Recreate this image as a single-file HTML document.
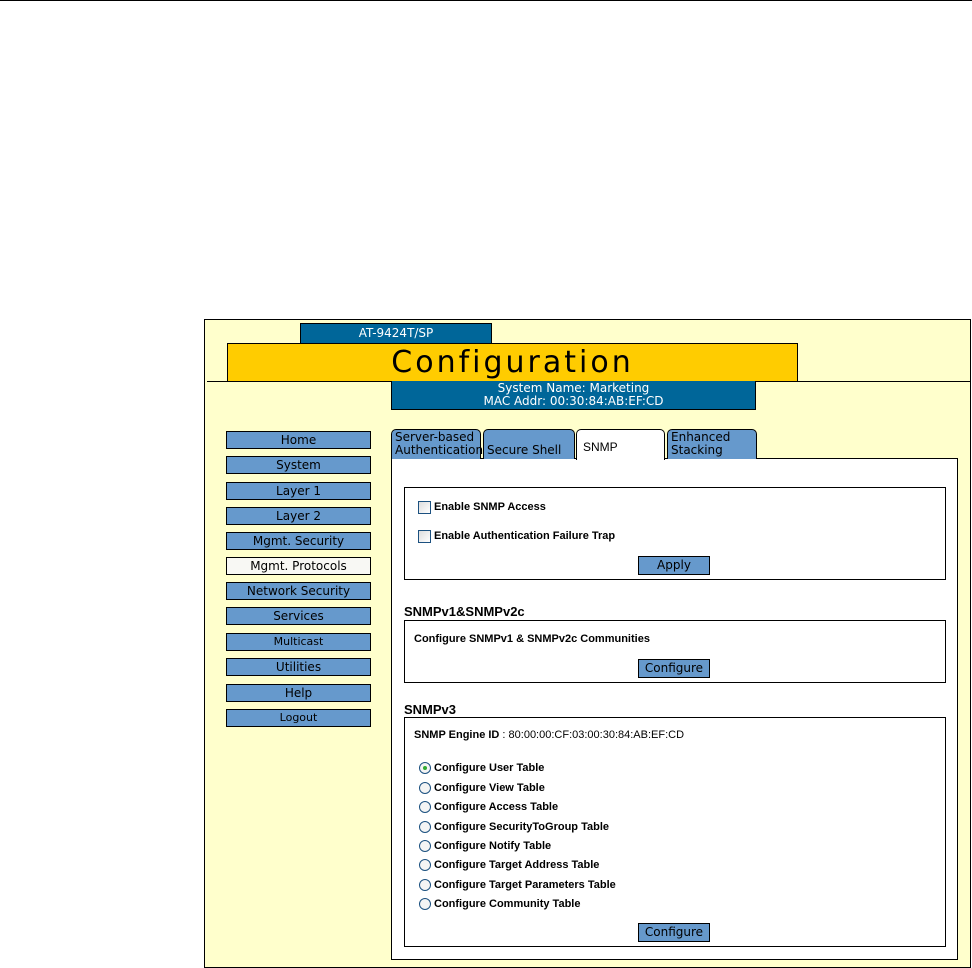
<!DOCTYPE html>
<html><head><meta charset="utf-8"><style>
*{margin:0;padding:0;box-sizing:border-box}
body{width:972px;height:968px;background:#fff;position:relative;overflow:hidden;font-family:"DejaVu Sans","Liberation Sans",sans-serif}
.a{position:absolute}
.nav{position:absolute;left:226px;width:145px;height:18px;background:#6699cc;border:1px solid #000;font-size:12px;text-align:center;line-height:16px;color:#000}
.tab{position:absolute;top:429px;height:30px;background:#6699cc;border:1px solid #000;border-bottom:none;border-radius:5px 5px 0 0;font-size:12px;line-height:13px;padding:1px 3px}
.box{position:absolute;left:404px;width:542px;border:1px solid #000;background:#fff}
.lbl{position:absolute;font-family:"Liberation Sans",sans-serif;font-weight:bold;font-size:11px;color:#000}
.btn{position:absolute;left:638px;width:72px;height:19px;background:#6699cc;border:1px solid #000;font-size:12px;text-align:center;line-height:17px}
.cb{position:absolute;left:418px;width:13px;height:13px;border:1px solid #1c5180;background:linear-gradient(135deg,#ddd,#fff)}
.rd{position:absolute;left:419px;width:12px;height:12px;border:1px solid #1c5180;border-radius:50%;background:#f4f4f4}
.h{position:absolute;left:404px;font-family:"Liberation Sans",sans-serif;font-weight:bold;font-size:13px}
</style></head><body>
<div class="a" style="left:0;top:0;width:972px;height:1px;background:#000"></div>
<div class="a" style="left:204px;top:319px;width:767px;height:649px;background:#ffffcc;border:1px solid #000"></div>
<div class="a" style="left:300px;top:323px;width:192px;height:21px;background:#006699;border:1px solid #000;color:#fff;font-size:12px;text-align:center;line-height:19px">AT-9424T/SP</div>
<div class="a" style="left:227px;top:343px;width:571px;height:39px;background:#ffcc00;border:1px solid #000;font-size:30px;letter-spacing:3px;text-align:center;line-height:38px">Configuration</div>
<div class="a" style="left:207px;top:381px;width:763px;height:1px;background:#000"></div>
<div class="a" style="left:391px;top:381px;width:365px;height:29px;background:#006699;border:1px solid #000;border-top:none;color:#fff;font-size:12px;text-align:center;line-height:13px;padding-top:1px">System Name: Marketing<br>MAC Addr: 00:30:84:AB:EF:CD</div>

<div class="nav" style="top:431px">Home</div>
<div class="nav" style="top:456px">System</div>
<div class="nav" style="top:482px">Layer 1</div>
<div class="nav" style="top:507px">Layer 2</div>
<div class="nav" style="top:532px">Mgmt. Security</div>
<div class="nav" style="top:557px;background:#f8f8f4">Mgmt. Protocols</div>
<div class="nav" style="top:582px">Network Security</div>
<div class="nav" style="top:607px">Services</div>
<div class="nav" style="top:633px;font-size:11px">Multicast</div>
<div class="nav" style="top:658px">Utilities</div>
<div class="nav" style="top:684px">Help</div>
<div class="nav" style="top:709px;font-size:11px">Logout</div>

<div class="a" style="left:391px;top:458px;width:567px;height:502px;background:#fff;border:1px solid #000"></div>
<div class="tab" style="left:391px;width:90px">Server-based<br>Authentication</div>
<div class="tab" style="left:483px;width:92px;padding-top:14px">Secure Shell</div>
<div class="tab" style="left:576px;width:89px;background:#fff;height:31px;padding-top:11px;padding-left:6px;font-family:'Liberation Sans',sans-serif">SNMP</div>
<div class="tab" style="left:667px;width:90px">Enhanced<br>Stacking</div>

<div class="box" style="top:487px;height:93px"></div>
<div class="cb" style="top:501px"></div><div class="lbl" style="left:434px;top:501px">Enable SNMP Access</div>
<div class="cb" style="top:530px"></div><div class="lbl" style="left:434px;top:530px">Enable Authentication Failure Trap</div>
<div class="btn" style="top:556px">Apply</div>

<div class="h" style="top:604px">SNMPv1&amp;SNMPv2c</div>
<div class="box" style="top:620px;height:63px"></div>
<div class="lbl" style="left:414px;top:633px">Configure SNMPv1 &amp; SNMPv2c Communities</div>
<div class="btn" style="top:659px">Configure</div>

<div class="h" style="top:702px">SNMPv3</div>
<div class="box" style="top:717px;height:230px"></div>
<div class="lbl" style="left:414px;top:729px">SNMP Engine ID <span style="font-weight:normal">: 80:00:00:CF:03:00:30:84:AB:EF:CD</span></div>
<div class="rd" style="top:762px"><div style="position:absolute;left:3px;top:3px;width:4px;height:4px;border-radius:50%;background:#3a3"></div></div><div class="lbl" style="left:434px;top:762px">Configure User Table</div>
<div class="rd" style="top:782px"></div><div class="lbl" style="left:434px;top:782px">Configure View Table</div>
<div class="rd" style="top:801px"></div><div class="lbl" style="left:434px;top:801px">Configure Access Table</div>
<div class="rd" style="top:821px"></div><div class="lbl" style="left:434px;top:821px">Configure SecurityToGroup Table</div>
<div class="rd" style="top:840px"></div><div class="lbl" style="left:434px;top:840px">Configure Notify Table</div>
<div class="rd" style="top:859px"></div><div class="lbl" style="left:434px;top:859px">Configure Target Address Table</div>
<div class="rd" style="top:879px"></div><div class="lbl" style="left:434px;top:879px">Configure Target Parameters Table</div>
<div class="rd" style="top:898px"></div><div class="lbl" style="left:434px;top:898px">Configure Community Table</div>
<div class="btn" style="top:923px">Configure</div>
</body></html>
